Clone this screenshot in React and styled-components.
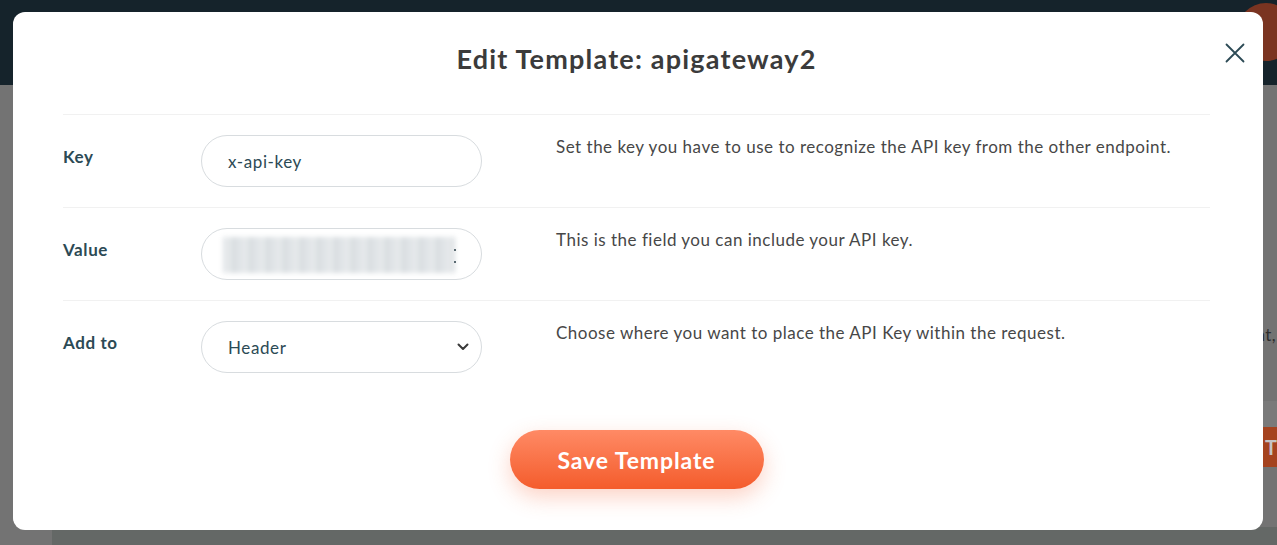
import React from 'react';
import styled, { createGlobalStyle } from 'styled-components';

const GlobalStyle = createGlobalStyle`
  * { box-sizing: border-box; }
  body {
    margin: 0;
    font-family: 'Lato', 'Noto Sans', sans-serif;
    overflow: hidden;
  }
`;

const fields = [
  {
    label: 'Key',
    kind: 'text',
    value: 'x-api-key',
    help: 'Set the key you have to use to recognize the API key from the other endpoint.',
  },
  {
    label: 'Value',
    kind: 'secret',
    value: '',
    help: 'This is the field you can include your API key.',
  },
  {
    label: 'Add to',
    kind: 'select',
    value: 'Header',
    help: 'Choose where you want to place the API Key within the request.',
  },
];

const CloseIcon = () => (
  <svg width='20' height='20' viewBox='0 0 20 20' fill='none'>
    <path d='M1.5 1.5 L18.5 18.5 M18.5 1.5 L1.5 18.5' stroke='#2c4a55' strokeWidth='1.8' strokeLinecap='round' />
  </svg>
);

const Chevron = () => (
  <svg width='12' height='8' viewBox='0 0 12 8' fill='none'>
    <path d='M1.5 1.5 L6 6 L10.5 1.5' stroke='#3a3a3a' strokeWidth='2' strokeLinecap='round' strokeLinejoin='round' />
  </svg>
);

const FieldControl = ({ field }) => {
  if (field.kind === 'select') {
    return (
      <InputBox>
        <InputText>{field.value}</InputText>
        <Chevron />
      </InputBox>
    );
  }
  if (field.kind === 'secret') {
    return (
      <InputBox>
        <Blurred />
        <Edge />
      </InputBox>
    );
  }
  return (
    <InputBox>
      <InputText>{field.value}</InputText>
    </InputBox>
  );
};

const App = () => {
  return (
    <>
      <GlobalStyle />
      <Page>
        <TopBar>
          <Avatar />
        </TopBar>
        <Behind>
          <BehindText>endpoint,</BehindText>
          <BehindBand />
          <BehindButton>T</BehindButton>
        </Behind>
        <BehindCard />
      </Page>

      <Modal>
        <CloseButton>
          <CloseIcon />
        </CloseButton>
        <Title>Edit Template: apigateway2</Title>
        <Form>
          {fields.map((f) => (
            <Row key={f.label}>
              <Label>{f.label}</Label>
              <FieldControl field={f} />
              <Help>{f.help}</Help>
            </Row>
          ))}
        </Form>
        <Footer>
          <SaveButton>Save Template</SaveButton>
        </Footer>
      </Modal>
    </>
  );
};

export default App;

const Page = styled.div`
  width: 100vw;
  height: 100vh;
  background: #737373;
  display: flex;
  flex-direction: column;
  overflow: hidden;
`;

const TopBar = styled.div`
  height: 85px;
  flex-shrink: 0;
  background: #15232b;
  display: flex;
  justify-content: flex-end;
  align-items: flex-start;
`;

const Avatar = styled.div`
  width: 58px;
  height: 58px;
  border-radius: 50%;
  background: #7a3421;
  margin-top: 3px;
  margin-right: -18px;
`;

const Behind = styled.div`
  display: flex;
  flex-direction: column;
  align-items: flex-end;
  padding-top: 238px;
`;

const BehindText = styled.div`
  font-size: 17px;
  line-height: 24px;
  letter-spacing: 0.4px;
  color: #2e2e2e;
  margin-right: 1px;
`;

const BehindBand = styled.div`
  width: 40px;
  height: 26px;
  margin-top: 54px;
  background: #7a7a7a;
`;

const BehindButton = styled.div`
  width: 14px;
  height: 40px;
  padding-left: 2px;
  background: #a5431f;
  color: #c4c4c4;
  font-size: 20px;
  font-weight: 700;
  line-height: 40px;
  overflow: hidden;
`;

const BehindCard = styled.div`
  margin-left: 52px;
  margin-top: 60px;
  flex: 1;
  background: #646866;
`;

const Modal = styled.div`
  position: fixed;
  top: 12px;
  left: 13px;
  width: 1250px;
  height: 518px;
  background: #fff;
  border-radius: 12px;
  padding: 31px 53px 0 50px;
`;

const CloseButton = styled.button`
  position: absolute;
  top: 31px;
  right: 18px;
  width: 20px;
  height: 20px;
  padding: 0;
  border: none;
  background: transparent;
  display: flex;
  cursor: pointer;
`;

const Title = styled.h2`
  margin: 0;
  text-align: center;
  font-size: 27px;
  line-height: 32px;
  letter-spacing: 1.2px;
  font-weight: 700;
  color: #3b3b3b;
  padding-bottom: 39px;
`;

const Form = styled.div`
  display: flex;
  flex-direction: column;
`;

const Row = styled.div`
  display: grid;
  grid-template-columns: 138px 355px 1fr;
  align-items: start;
  border-top: 1px solid #f1f1f1;
  padding: 20px 0;
`;

const Label = styled.div`
  padding-top: 10px;
  font-size: 17px;
  line-height: 24px;
  letter-spacing: 0.6px;
  font-weight: 700;
  color: #2c4a55;
`;

const InputBox = styled.div`
  position: relative;
  width: 281px;
  height: 52px;
  border: 1px solid #d8dcdf;
  border-radius: 26px;
  display: flex;
  align-items: center;
  justify-content: space-between;
  padding: 0 12px 0 26px;
  overflow: hidden;
`;

const InputText = styled.span`
  font-size: 17px;
  letter-spacing: 0.6px;
  color: #2c4a55;
`;

const Blurred = styled.div`
  position: absolute;
  left: 21px;
  top: 8px;
  width: 232px;
  height: 36px;
  background: repeating-linear-gradient(
    90deg,
    #dfe3e6 0px,
    #e8ebed 6px,
    #d6dbde 11px,
    #e4e7ea 17px
  );
  filter: blur(2.5px);
`;

const Edge = styled.div`
  position: absolute;
  left: 252px;
  top: 20px;
  width: 2px;
  height: 14px;
  border-top: 2px solid #5a6a72;
  border-bottom: 2px solid #5a6a72;
`;

const Help = styled.div`
  font-size: 17px;
  line-height: 24px;
  letter-spacing: 0.5px;
  color: #474747;
`;

const Footer = styled.div`
  display: flex;
  justify-content: center;
  padding-top: 37px;
`;

const SaveButton = styled.button`
  width: 254px;
  height: 59px;
  border: none;
  border-radius: 30px;
  background: linear-gradient(180deg, #ff8a65 0%, #f45c2c 100%);
  box-shadow: 0 8px 22px rgba(244, 93, 46, 0.28);
  color: #fff;
  font-family: 'Lato', 'Noto Sans', sans-serif;
  font-size: 23px;
  letter-spacing: 0.9px;
  font-weight: 700;
  cursor: pointer;
`;
